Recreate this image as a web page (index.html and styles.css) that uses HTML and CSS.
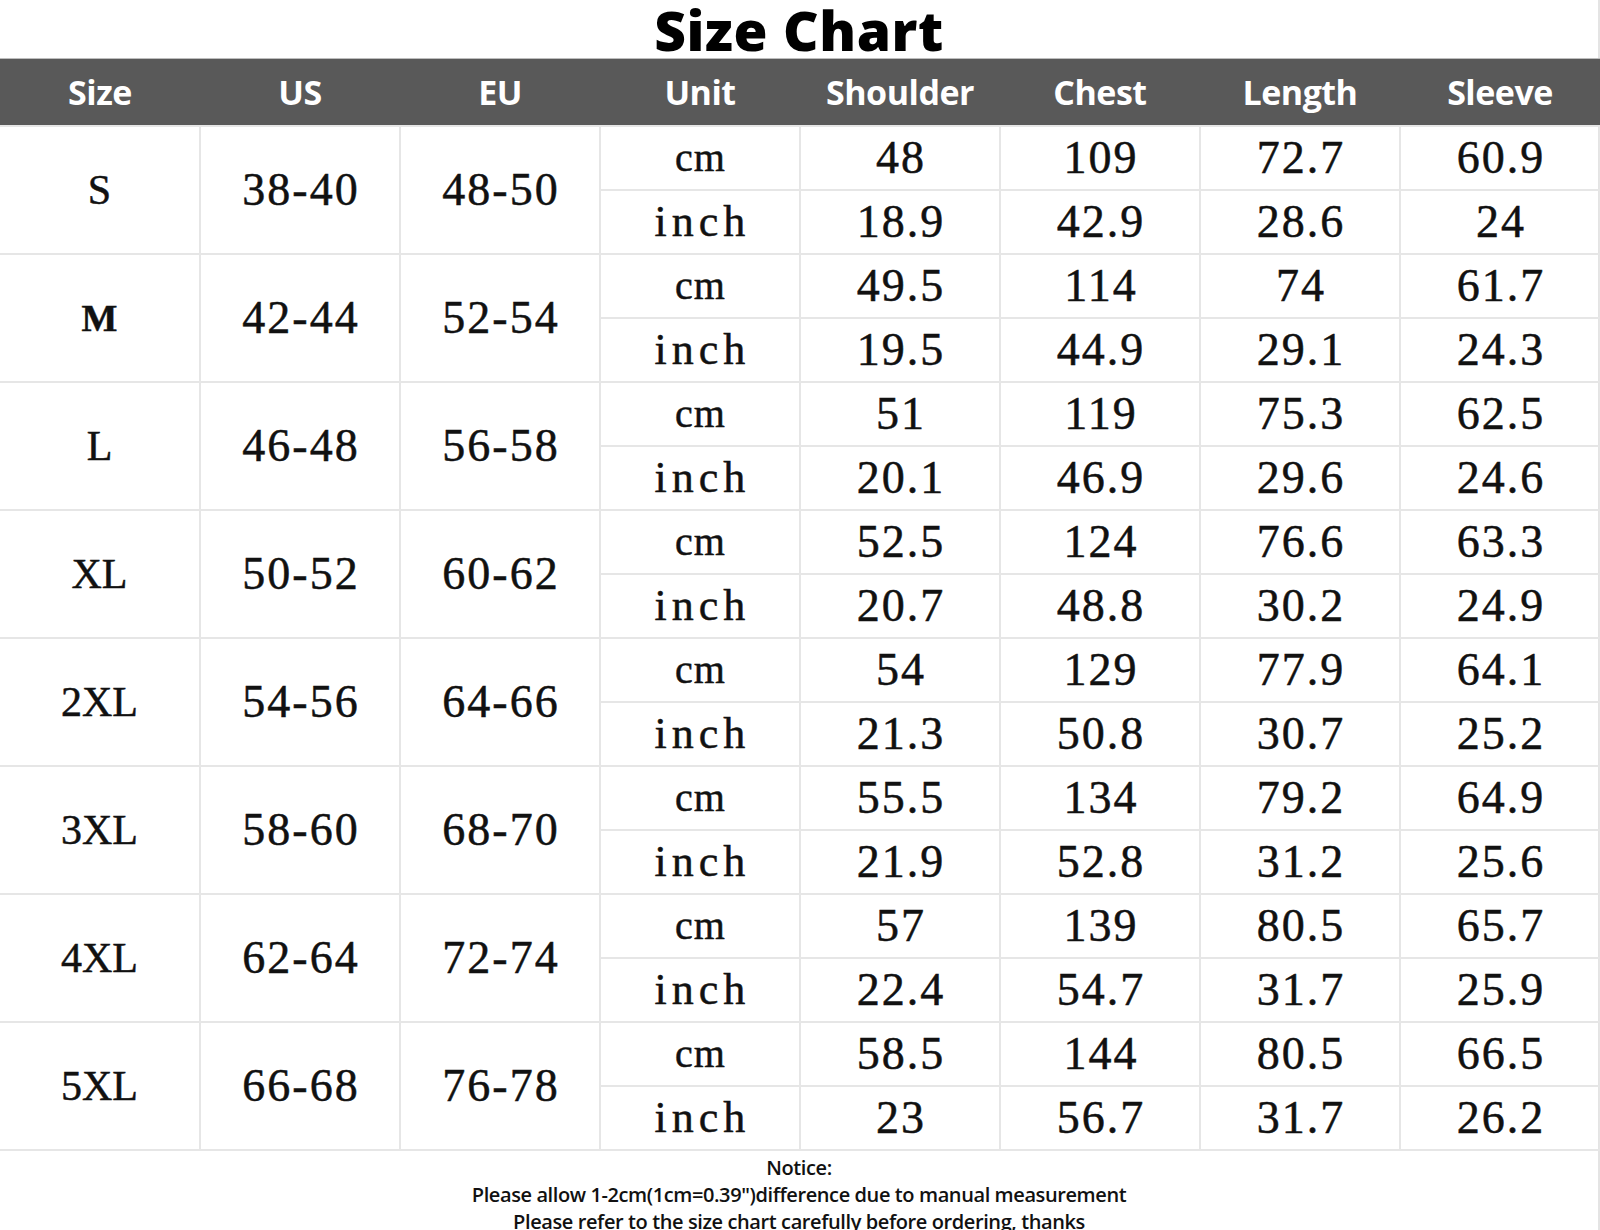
FILE: index.html
```html
<!DOCTYPE html>
<html lang="en">
<head>
<meta charset="utf-8">
<title>Size Chart</title>
<link rel="stylesheet" href="styles.css">
</head>
<body>
<div class="chart">
  <h1 class="title">Size Chart</h1>
  <table class="sizes">
    <colgroup>
      <col><col><col><col><col><col><col><col>
    </colgroup>
    <thead>
      <tr>
        <th>Size</th><th>US</th><th>EU</th><th>Unit</th><th>Shoulder</th><th>Chest</th><th>Length</th><th>Sleeve</th>
      </tr>
    </thead>
    <tbody>
      <tr class="cm"><td rowspan="2" class="size">S</td><td rowspan="2">38-40</td><td rowspan="2">48-50</td><td class="unit cm-u">cm</td><td>48</td><td>109</td><td>72.7</td><td>60.9</td></tr>
      <tr class="in"><td class="unit">inch</td><td>18.9</td><td>42.9</td><td>28.6</td><td>24</td></tr>

      <tr class="cm"><td rowspan="2" class="size bold">M</td><td rowspan="2">42-44</td><td rowspan="2">52-54</td><td class="unit cm-u">cm</td><td>49.5</td><td>114</td><td>74</td><td>61.7</td></tr>
      <tr class="in"><td class="unit">inch</td><td>19.5</td><td>44.9</td><td>29.1</td><td>24.3</td></tr>

      <tr class="cm"><td rowspan="2" class="size">L</td><td rowspan="2">46-48</td><td rowspan="2">56-58</td><td class="unit cm-u">cm</td><td>51</td><td>119</td><td>75.3</td><td>62.5</td></tr>
      <tr class="in"><td class="unit">inch</td><td>20.1</td><td>46.9</td><td>29.6</td><td>24.6</td></tr>

      <tr class="cm"><td rowspan="2" class="size">XL</td><td rowspan="2">50-52</td><td rowspan="2">60-62</td><td class="unit cm-u">cm</td><td>52.5</td><td>124</td><td>76.6</td><td>63.3</td></tr>
      <tr class="in"><td class="unit">inch</td><td>20.7</td><td>48.8</td><td>30.2</td><td>24.9</td></tr>

      <tr class="cm"><td rowspan="2" class="size">2XL</td><td rowspan="2">54-56</td><td rowspan="2">64-66</td><td class="unit cm-u">cm</td><td>54</td><td>129</td><td>77.9</td><td>64.1</td></tr>
      <tr class="in"><td class="unit">inch</td><td>21.3</td><td>50.8</td><td>30.7</td><td>25.2</td></tr>

      <tr class="cm"><td rowspan="2" class="size">3XL</td><td rowspan="2">58-60</td><td rowspan="2">68-70</td><td class="unit cm-u">cm</td><td>55.5</td><td>134</td><td>79.2</td><td>64.9</td></tr>
      <tr class="in"><td class="unit">inch</td><td>21.9</td><td>52.8</td><td>31.2</td><td>25.6</td></tr>

      <tr class="cm"><td rowspan="2" class="size">4XL</td><td rowspan="2">62-64</td><td rowspan="2">72-74</td><td class="unit cm-u">cm</td><td>57</td><td>139</td><td>80.5</td><td>65.7</td></tr>
      <tr class="in"><td class="unit">inch</td><td>22.4</td><td>54.7</td><td>31.7</td><td>25.9</td></tr>

      <tr class="cm"><td rowspan="2" class="size">5XL</td><td rowspan="2">66-68</td><td rowspan="2">76-78</td><td class="unit cm-u">cm</td><td>58.5</td><td>144</td><td>80.5</td><td>66.5</td></tr>
      <tr class="in"><td class="unit">inch</td><td>23</td><td>56.7</td><td>31.7</td><td>26.2</td></tr>
    </tbody>
  </table>
  <div class="notice">
    <p>Notice:</p>
    <p>Please allow 1-2cm(1cm=0.39")difference due to manual measurement</p>
    <p>Please refer to the size chart carefully before ordering, thanks</p>
  </div>
</div>
</body>
</html>
```

FILE: styles.css
```css
html, body {
  margin: 0;
  padding: 0;
  background: #ffffff;
}

.chart {
  width: 1598px;
  border-right: 2px solid #e4e4e4;
  background: #ffffff;
}

.title {
  margin: 0;
  height: 58px;
  text-align: center;
  font-family: "Open Sans", "Noto Sans", sans-serif;
  font-weight: 800;
  font-size: 55px;
  letter-spacing: 0.6px;
  color: #000000;
  line-height: 60px;
}

.sizes {
  width: 1598px;
  table-layout: fixed;
  border-collapse: collapse;
}

.sizes col {
  width: 200px;
}

.sizes thead tr {
  height: 67px;
}

.sizes th {
  background: #595959;
  border-top: 1px solid #bdbdbd;
  color: #ffffff;
  font-family: "Open Sans", "Noto Sans", sans-serif;
  font-weight: 700;
  font-size: 34px;
  letter-spacing: -0.5px;
  padding: 0;
  text-align: center;
  vertical-align: middle;
}

.sizes td {
  height: 62px;
  padding: 0 0 0 2px;
  border: 2px solid #e6e6e6;
  text-align: center;
  vertical-align: middle;
  font-family: "Liberation Serif", "Times New Roman", serif;
  font-size: 46px;
  letter-spacing: 2px;
  color: #111111;
  -webkit-text-stroke: 0.5px #111111;
}

.sizes tr > td:first-child {
  border-left: none;
}

.sizes td.size {
  font-size: 42px;
  letter-spacing: 0;
  padding-left: 0;
}

.sizes td.unit {
  font-size: 44px;
  letter-spacing: 5px;
  padding-left: 5px;
}

.sizes td.cm-u {
  font-size: 40px;
  letter-spacing: 1px;
  padding-left: 1px;
}

.sizes td.bold {
  font-weight: 700;
  font-size: 38px;
}

.notice {
  padding-top: 3px;
  text-align: center;
  font-family: "Open Sans", "Noto Sans", sans-serif;
  font-weight: 600;
  font-size: 20px;
  letter-spacing: -0.4px;
  color: #111111;
}

.notice p {
  margin: 0;
  line-height: 27px;
}
```
